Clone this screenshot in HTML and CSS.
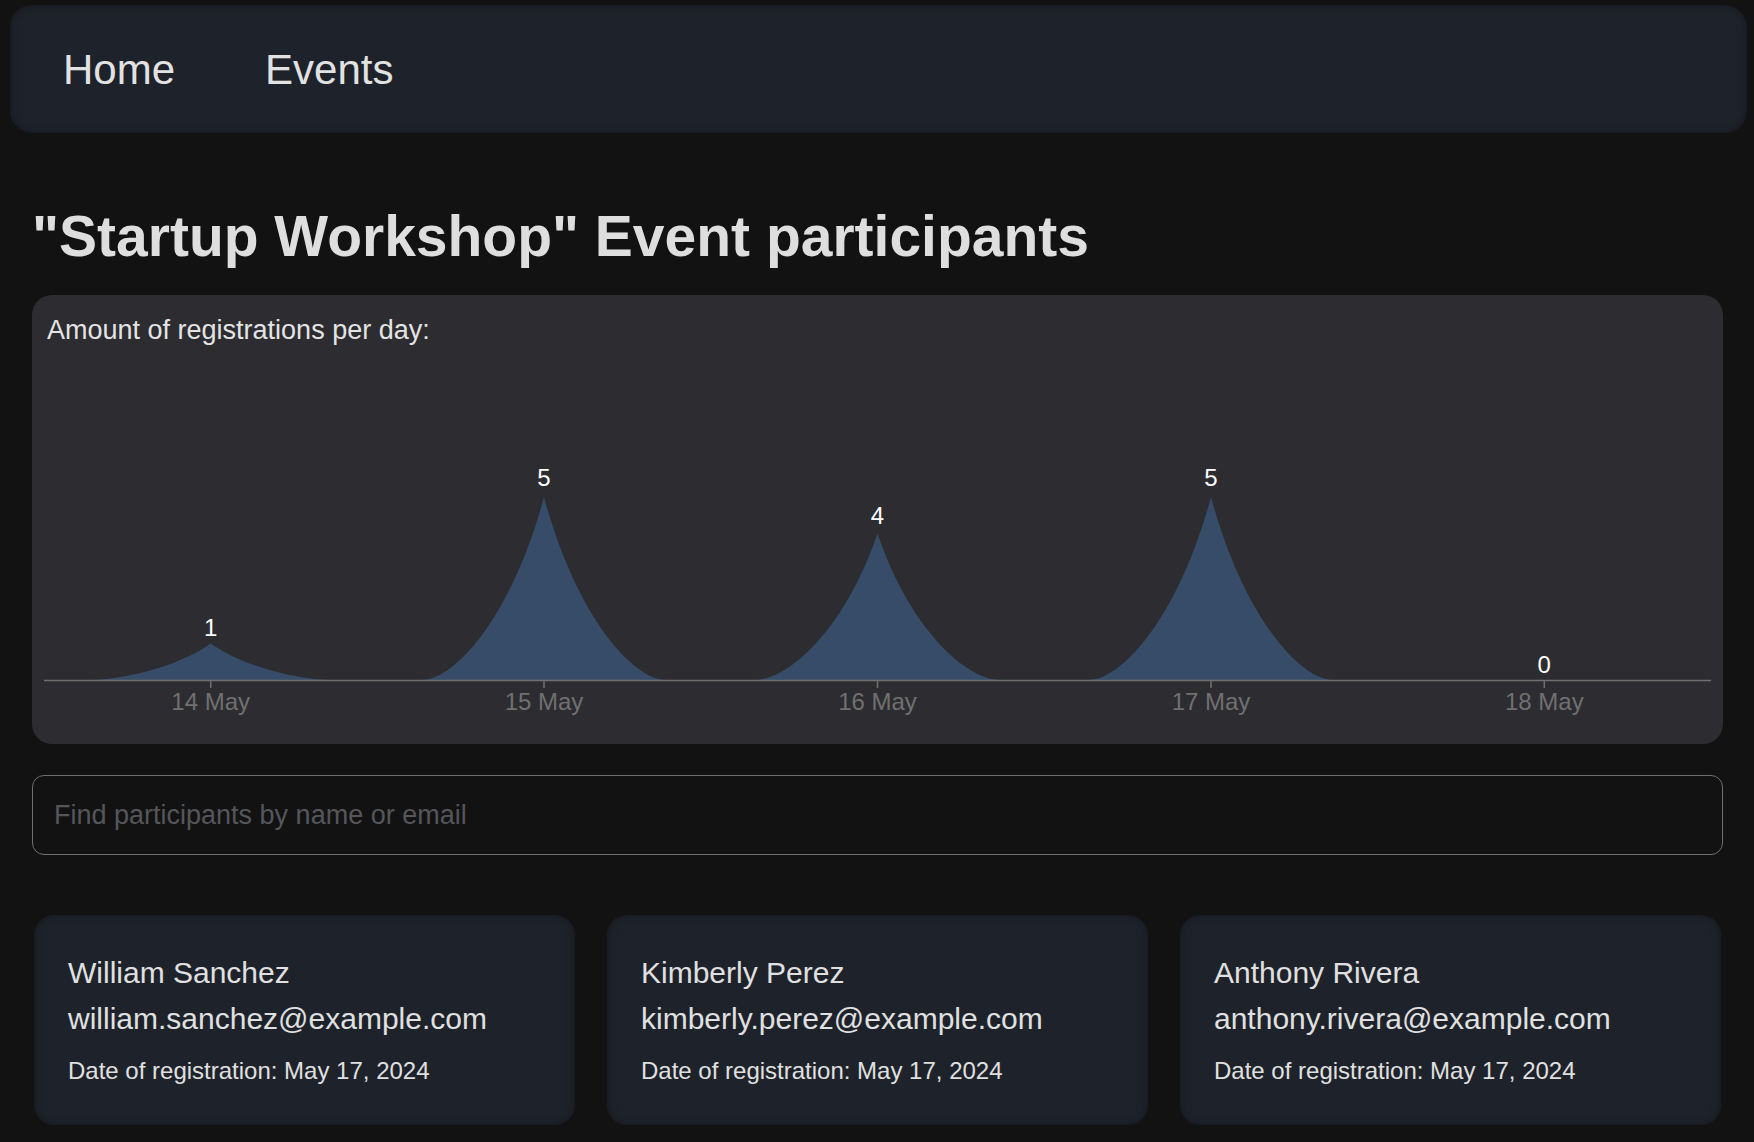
FILE: index.html
```html
<!DOCTYPE html>
<html lang="en">
<head>
<meta charset="utf-8">
<title>Startup Workshop participants</title>
<link rel="stylesheet" href="styles.css">
</head>
<body>
<nav class="topnav">
  <a class="nav-link" href="#">Home</a>
  <a class="nav-link" href="#">Events</a>
</nav>
<main class="page">
  <h1 class="title">"Startup Workshop" Event participants</h1>
  <section class="chart-card">
    <div class="chart-label">Amount of registrations per day:</div>
    <svg class="chart" width="1667" height="380" viewBox="0 0 1667 380">
      <g class="areas">
        <path d="M 44.7 334 C 75.2 334 132 322 166.7 297.4 C 201.4 322 258.2 334 288.7 334 Z"/>
        <path d="M 378 334 C 408.5 334 466 276 500 151 C 534 276 591.5 334 622 334 Z"/>
        <path d="M 711.5 334 C 742 334 799.5 287.6 833.5 187.6 C 867.5 287.6 925 334 955.5 334 Z"/>
        <path d="M 1045 334 C 1075.5 334 1133 276 1167 151 C 1201 276 1258.5 334 1289 334 Z"/>
      </g>
      <line class="axis-line" x1="0" y1="334.5" x2="1667" y2="334.5"/>
      <g class="ticks">
        <line x1="166.7" y1="334" x2="166.7" y2="342"/>
        <line x1="500" y1="334" x2="500" y2="342"/>
        <line x1="833.5" y1="334" x2="833.5" y2="342"/>
        <line x1="1167" y1="334" x2="1167" y2="342"/>
        <line x1="1500.3" y1="334" x2="1500.3" y2="342"/>
      </g>
      <g class="tick-labels">
        <text x="166.7" y="364">14 May</text>
        <text x="500" y="364">15 May</text>
        <text x="833.5" y="364">16 May</text>
        <text x="1167" y="364">17 May</text>
        <text x="1500.3" y="364">18 May</text>
      </g>
      <g class="value-labels">
        <text x="166.7" y="290">1</text>
        <text x="500" y="140">5</text>
        <text x="833.5" y="178">4</text>
        <text x="1167" y="140">5</text>
        <text x="1500.3" y="327">0</text>
      </g>
    </svg>
  </section>
  <input class="search" type="text" placeholder="Find participants by name or email">
  <section class="cards">
    <article class="card">
      <div class="card-name">William Sanchez</div>
      <div class="card-email">william.sanchez@example.com</div>
      <div class="card-date">Date of registration: May 17, 2024</div>
    </article>
    <article class="card">
      <div class="card-name">Kimberly Perez</div>
      <div class="card-email">kimberly.perez@example.com</div>
      <div class="card-date">Date of registration: May 17, 2024</div>
    </article>
    <article class="card">
      <div class="card-name">Anthony Rivera</div>
      <div class="card-email">anthony.rivera@example.com</div>
      <div class="card-date">Date of registration: May 17, 2024</div>
    </article>
  </section>
</main>
</body>
</html>
```
FILE: styles.css
```css
html, body {
  background: #121212;
}
body {
  margin: 0;
  font-family: "Liberation Sans", Arial, Helvetica, sans-serif;
  color: #dedede;
  overflow: hidden;
}
.topnav {
  margin: 5px 7px 0 10px;
  height: 128px;
  box-sizing: border-box;
  padding: 2px 0 0 53px;
  display: flex;
  align-items: center;
  gap: 90px;
  background: #1e222a;
  border-radius: 22px;
  box-shadow: inset 0 0 10px rgba(0, 0, 0, 0.35);
}
.nav-link {
  font-size: 42px;
  line-height: 50px;
  color: #e2e2e2;
  text-decoration: none;
}
.page {
  padding: 0 31px 0 32px;
}
.title {
  margin: 70px 0 0;
  font-size: 57px;
  line-height: 66px;
  font-weight: bold;
  color: #dedede;
}
.chart-card {
  margin-top: 26px;
  background: #2c2c31;
  border-radius: 20px;
  padding: 19px 12px 18px;
}
.chart-label {
  font-size: 27px;
  line-height: 32px;
  padding-left: 3px;
  color: #e4e4e4;
}
.chart {
  display: block;
}
.areas path {
  fill: #364c68;
}
.axis-line {
  stroke: #707070;
  stroke-width: 1.5;
}
.ticks line {
  stroke: #707070;
  stroke-width: 1.5;
}
.tick-labels text {
  font-family: "Liberation Sans", Arial, sans-serif;
  font-size: 24px;
  fill: #707070;
  text-anchor: middle;
}
.value-labels text {
  font-family: "Liberation Sans", Arial, sans-serif;
  font-size: 24px;
  fill: #ffffff;
  text-anchor: middle;
}
.search {
  display: block;
  box-sizing: border-box;
  width: 100%;
  height: 80px;
  margin-top: 31px;
  padding: 0 21px;
  background: transparent;
  border: 1px solid #6f6f6f;
  border-radius: 12px;
  font-family: "Liberation Sans", Arial, sans-serif;
  font-size: 27px;
  color: #dedede;
  outline: none;
}
.search::placeholder {
  color: #55565b;
}
.cards {
  margin-top: 60px;
  padding: 0 2px;
  display: grid;
  grid-template-columns: repeat(3, 1fr);
  gap: 32px;
}
.card {
  background: #1e222a;
  border-radius: 20px;
  box-shadow: inset 0 0 10px rgba(0, 0, 0, 0.35);
  padding: 35px 34px 36px;
  color: #e0e0e0;
}
.card-name,
.card-email {
  font-size: 30px;
  line-height: 46px;
}
.card-date {
  margin-top: 11px;
  font-size: 24px;
  line-height: 36px;
}
```
